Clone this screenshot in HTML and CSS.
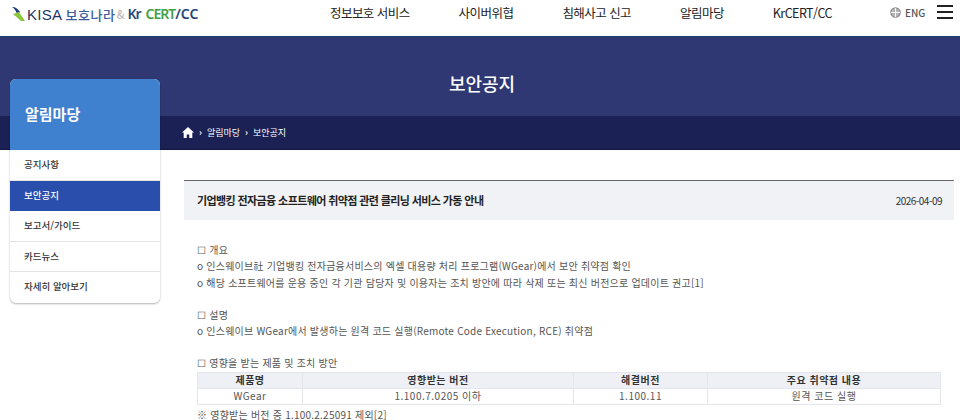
FILE: index.html
```html
<!DOCTYPE html>
<html lang="ko">
  <head>
    <meta charset="UTF-8" />
    <title>보안공지</title>
    <link rel="stylesheet" href="styles.css">
  </head>
  <body>
    <header class="top">
      <a class="logo">
        <svg class="logo-mark" width="14" height="16" viewBox="0 0 14 16">
          <path d="M0 1 C4 1 6 3 8 6 L5 8 C4 5 3 3 0 1Z" fill="#1f3f7a"/>
          <path d="M1 8 L7 6 L13 15 L9 15 Z" fill="#8cc63f"/>
        </svg>
        <span class="logo-kisa">KISA</span>
        <span class="logo-bn">보호나라</span>
        <span class="logo-amp">&amp;</span>
        <span class="logo-kr">Kr</span><span class="logo-cert">CERT</span><span class="logo-cc">/CC</span>
      </a>
      <nav class="gnb">
        <a>정보보호 서비스</a>
        <a>사이버위협</a>
        <a>침해사고 신고</a>
        <a>알림마당</a>
        <a>KrCERT/CC</a>
      </nav>
      <a class="lang">
        <svg width="11" height="11" viewBox="0 0 11 11" fill="none" stroke="#8a8a8a" stroke-width="1.2">
          <circle cx="5.5" cy="5.5" r="4.7" fill="#b5b5b5"/>
          <path d="M0.8 5.5H10.2M5.5 0.8V10.2" stroke="#fff" stroke-width="0.9"/>
        </svg>
        ENG
      </a>
      <div class="burger"><i></i><i></i><i></i></div>
    </header>

    <section class="banner">
      <h1>보안공지</h1>
      <div class="crumbs">
        <svg width="12" height="11" viewBox="0 0 12 11"><path d="M6 0 L12 5.6 H10.3 V11 H7.3 V7.4 H4.7 V11 H1.7 V5.6 H0 Z" fill="#fff"/></svg>
        <span class="sep">›</span>
        <span>알림마당</span>
        <span class="sep">›</span>
        <span>보안공지</span>
      </div>
    </section>

    <div class="wrap">
      <aside class="side">
        <h2>알림마당</h2>
        <ul>
          <li>공지사항</li>
          <li class="on">보안공지</li>
          <li>보고서/가이드</li>
          <li>카드뉴스</li>
          <li>자세히 알아보기</li>
        </ul>
      </aside>

      <main class="view">
        <div class="view-head">
          <strong>기업뱅킹 전자금융 소프트웨어 취약점 관련 클리닝 서비스 가동 안내</strong>
          <span>2026-04-09</span>
        </div>
        <div class="view-body">
          <p>☐ 개요</p>
          <p>o 인스웨이브社 기업뱅킹 전자금융서비스의 엑셀 대용량 처리 프로그램(WGear)에서 보안 취약점 확인</p>
          <p>o 해당 소프트웨어를 운용 중인 각 기관 담당자 및 이용자는 조치 방안에 따라 삭제 또는 최신 버전으로 업데이트 권고[1]</p>
          <p class="gap">☐ 설명</p>
          <p>o 인스웨이브 WGear에서 발생하는 원격 코드 실행(Remote Code Execution, RCE) 취약점</p>
          <p class="gap">☐ 영향을 받는 제품 및 조치 방안</p>
          <table>
            <colgroup>
              <col class="c1"><col class="c2"><col class="c3"><col class="c4">
            </colgroup>
            <tr>
              <th>제품명</th>
              <th>영향받는 버전</th>
              <th>해결버전</th>
              <th>주요 취약점 내용</th>
            </tr>
            <tr>
              <td>WGear</td>
              <td>1.100.7.0205 이하</td>
              <td>1.100.11</td>
              <td>원격 코드 실행</td>
            </tr>
          </table>
          <p class="note">※ 영향받는 버전 중 1.100.2.25091 제외[2]</p>
        </div>
      </main>
    </div>
  </body>
</html>
```

FILE: styles.css
```css
* {
  box-sizing: border-box;
}

html, body {
  margin: 0;
  height: 420px;
  overflow: hidden;
}

body {
  background: #fff;
  color: #333;
  font-family: "Noto Sans CJK KR", "Noto Sans", sans-serif;
}

h1, h2, p, ul {
  margin: 0;
  padding: 0;
}

/* header */
.top {
  display: flex;
  align-items: center;
  height: 37px;
  padding: 0 7px 12px 12px;
  border-bottom: 1px solid #25406f;
}

.logo {
  display: flex;
  align-items: center;
  width: 318px;
  padding-top: 4px;
  font-size: 14px;
  font-weight: 500;
  line-height: 1;
  white-space: nowrap;
}

.logo-mark {
  margin-right: 1px;
}

.logo-kisa {
  margin-right: 3px;
  color: #1f3566;
  font-family: "Liberation Sans", sans-serif;
  font-size: 15px;
  letter-spacing: 0.3px;
}

.logo-bn {
  color: #3c5c9c;
  font-size: 13px;
  letter-spacing: 0.6px;
}

.logo-amp {
  margin: 0 3px 0 1px;
  color: #b9b9b9;
  font-size: 11px;
}

.logo-kr, .logo-cc, .logo-cert {
  font-family: "Noto Sans", sans-serif;
  font-size: 14px;
  font-weight: 600;
  letter-spacing: -1px;
}

.logo-kr, .logo-cc {
  color: #24477f;
}

.logo-cert {
  margin-left: 5px;
  color: #42a047;
}

.logo-cc {
  letter-spacing: 0;
}

.gnb {
  display: flex;
  gap: 49px;
  width: 560px;
  color: #222;
  font-size: 12.5px;
  letter-spacing: -0.55px;
}

.lang {
  display: flex;
  align-items: center;
  gap: 4px;
  width: 47px;
  color: #555;
  font-size: 10px;
  font-weight: 500;
}

.burger {
  display: flex;
  flex-direction: column;
  gap: 4px;
  width: 16px;
}

.burger i {
  display: block;
  height: 2px;
  background: #222;
}

/* banner */
.banner {
  height: 113px;
  background: #2f3872;
  color: #fff;
}

.banner h1 {
  height: 79px;
  padding: 32px 0 0 4px;
  font-size: 18px;
  font-weight: 500;
  line-height: 28px;
  text-align: center;
}

.crumbs {
  display: flex;
  align-items: center;
  gap: 5px;
  height: 34px;
  padding-left: 182px;
  background: #1b2154;
  border-bottom: 1px solid #12163c;
  font-size: 9px;
}

.sep {
  font-weight: 700;
}

/* body */
.wrap {
  display: flex;
  align-items: flex-start;
  padding: 0 7px 0 10px;
}

.side {
  flex: none;
  width: 150px;
  margin-top: -71px;
  background: #fff;
  border-radius: 6px;
  box-shadow: 0 1px 2px rgba(0, 0, 0, 0.3);
  overflow: hidden;
}

.side h2 {
  height: 71px;
  padding-left: 15px;
  background: #3f80cf;
  color: #fff;
  font-size: 15px;
  font-weight: 700;
  line-height: 70px;
}

.side ul {
  list-style: none;
}

.side li {
  height: 30.5px;
  padding-left: 14px;
  border-bottom: 1px solid #e3e3e3;
  color: #333;
  font-size: 9.5px;
  font-weight: 500;
  line-height: 28px;
}

.side li:last-child {
  border-bottom: 0;
}

.side li.on {
  background: #2a4eab;
  border-bottom: 0;
  color: #fff;
}

.view {
  flex: 1;
  margin: 30px 0 0 24px;
}

.view-head {
  display: flex;
  align-items: center;
  justify-content: space-between;
  height: 40px;
  padding: 0 12px 1px 13px;
  background: #f1f2f6;
  border-top: 1px solid #666;
  font-size: 10px;
  letter-spacing: -0.5px;
}

.view-head strong {
  color: #222;
  font-size: 11px;
  font-weight: 700;
  letter-spacing: -0.6px;
}

.view-body {
  padding: 22px 13px 0;
  color: #555;
  font-size: 10px;
  letter-spacing: 0.22px;
  line-height: 16.25px;
}

.view-body .gap {
  margin-top: 16px;
}

table {
  width: 743px;
  border-collapse: collapse;
  table-layout: fixed;
  text-align: center;
}

.c1 { width: 105px; }
.c2 { width: 271px; }
.c3 { width: 134px; }
.c4 { width: 233px; }

th, td {
  height: 16px;
  padding: 0;
  border: 1px solid #e4e6ec;
  font-size: 10px;
  letter-spacing: 0.5px;
  line-height: 14px;
}

th {
  background: #eff0f5;
  color: #333;
  font-weight: 700;
}

.note {
  margin-top: 2px;
}
```
